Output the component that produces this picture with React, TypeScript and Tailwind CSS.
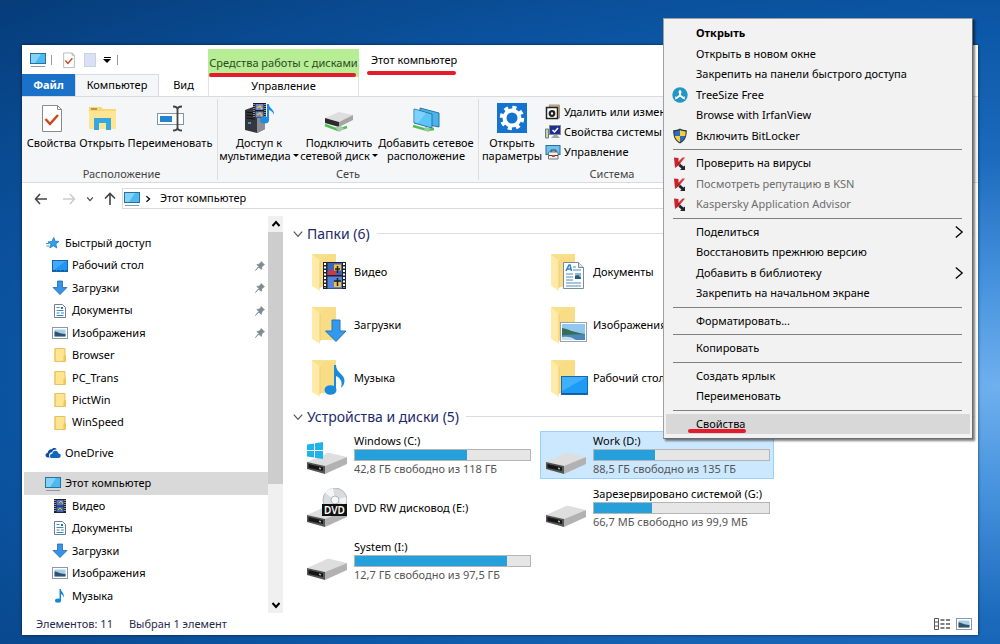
import type { ReactNode } from 'react';

type IconName =
  | 'monitor'
  | 'star'
  | 'desktop'
  | 'download'
  | 'document'
  | 'picture'
  | 'folder'
  | 'cloud'
  | 'film'
  | 'music';

interface NavItem {
  label: string;
  icon: IconName;
  level: 0 | 1;
  pinned?: boolean;
  selected?: boolean;
  gapBefore?: boolean;
}

interface Drive {
  name: string;
  free?: string;
  used?: number;
  kind: 'plain' | 'windows' | 'dvd';
  selected?: boolean;
}

interface MenuEntry {
  label: string;
  icon?: 'treesize' | 'shield' | 'kaspersky';
  bold?: boolean;
  disabled?: boolean;
  submenu?: boolean;
  active?: boolean;
}

const navItems: NavItem[] = [
  { label: 'Быстрый доступ', icon: 'star', level: 0 },
  { label: 'Рабочий стол', icon: 'desktop', level: 1, pinned: true },
  { label: 'Загрузки', icon: 'download', level: 1, pinned: true },
  { label: 'Документы', icon: 'document', level: 1, pinned: true },
  { label: 'Изображения', icon: 'picture', level: 1, pinned: true },
  { label: 'Browser', icon: 'folder', level: 1 },
  { label: 'PC_Trans', icon: 'folder', level: 1 },
  { label: 'PictWin', icon: 'folder', level: 1 },
  { label: 'WinSpeed', icon: 'folder', level: 1 },
  { label: 'OneDrive', icon: 'cloud', level: 0, gapBefore: true },
  { label: 'Этот компьютер', icon: 'monitor', level: 0, gapBefore: true, selected: true },
  { label: 'Видео', icon: 'film', level: 1 },
  { label: 'Документы', icon: 'document', level: 1 },
  { label: 'Загрузки', icon: 'download', level: 1 },
  { label: 'Изображения', icon: 'picture', level: 1 },
  { label: 'Музыка', icon: 'music', level: 1 },
];

const folders: { label: string; icon: IconName }[] = [
  { label: 'Видео', icon: 'film' },
  { label: 'Документы', icon: 'document' },
  { label: 'Загрузки', icon: 'download' },
  { label: 'Изображения', icon: 'picture' },
  { label: 'Музыка', icon: 'music' },
  { label: 'Рабочий стол', icon: 'desktop' },
];

const drives: Drive[] = [
  { name: 'Windows (C:)', free: '42,8 ГБ свободно из 118 ГБ', used: 64, kind: 'windows' },
  { name: 'Work (D:)', free: '88,5 ГБ свободно из 135 ГБ', used: 35, kind: 'plain', selected: true },
  { name: 'DVD RW дисковод (E:)', kind: 'dvd' },
  { name: 'Зарезервировано системой (G:)', free: '66,7 МБ свободно из 99,9 МБ', used: 33, kind: 'plain' },
  { name: 'System (I:)', free: '12,7 ГБ свободно из 97,5 ГБ', used: 87, kind: 'plain' },
];

const menuGroups: MenuEntry[][] = [
  [
    { label: 'Открыть', bold: true },
    { label: 'Открыть в новом окне' },
    { label: 'Закрепить на панели быстрого доступа' },
    { label: 'TreeSize Free', icon: 'treesize' },
    { label: 'Browse with IrfanView' },
    { label: 'Включить BitLocker', icon: 'shield' },
  ],
  [
    { label: 'Проверить на вирусы', icon: 'kaspersky' },
    { label: 'Посмотреть репутацию в KSN', icon: 'kaspersky', disabled: true },
    { label: 'Kaspersky Application Advisor', icon: 'kaspersky', disabled: true },
  ],
  [
    { label: 'Поделиться', submenu: true },
    { label: 'Восстановить прежнюю версию' },
    { label: 'Добавить в библиотеку', submenu: true },
    { label: 'Закрепить на начальном экране' },
  ],
  [{ label: 'Форматировать...' }],
  [{ label: 'Копировать' }],
  [{ label: 'Создать ярлык' }, { label: 'Переименовать' }],
  [{ label: 'Свойства', active: true }],
];

/* Small 16px icons */

function SmallIcon({ name }: { name: IconName }) {
  return (
    <svg aria-hidden="true" className="w-4 h-4 shrink-0" viewBox="0 0 16 16" fill="none">
      {name === 'monitor' && (
        <>
          <rect x="0.5" y="1.5" width="15" height="10" fill="#4cb9f0" stroke="#2a6f9e" />
          <path d="M1 2h10L5 11H1z" fill="#83d3f9" />
          <path d="M1 14.500h14" stroke="#7d9cb0" />
        </>
      )}
      {name === 'star' && (
        <path d="M8.800 2.500l1.200 3.700 4 .2-3.200 2.500 1 4.100-3.400-2.300L4.800 13l1.200-3.900L3 6.900l3.900-.4zM1 8.500h3M1.500 11h3" fill="#2ea3ea" stroke="#1b76bb" strokeWidth=".8" />
      )}
      {name === 'desktop' && (
        <>
          <rect x="0.5" y="2.500" width="15" height="11" fill="#2196f3" stroke="#1465ad" />
          <path d="M1 3h13L2 12H1z" fill="#43a9f8" />
          <path d="M1 12.500h14" stroke="#135893" strokeDasharray="3 1" />
        </>
      )}
      {name === 'download' && (
        <path d="M5.500 1h5v6.500H15L8 14.500 1 7.500h4.500z" fill="#3793e6" stroke="#2467ad" strokeWidth=".8" />
      )}
      {name === 'document' && (
        <>
          <path d="M2.500 1.500h8l3 3v10h-11z" fill="#fff" stroke="#6f7f8c" />
          <path d="M4.500 4.500h3M4.500 7.500h7M4.500 10h3M9 10h3M4.500 12.500h7" stroke="#3c8dbc" />
          <path d="M9 4h2v2H9z" fill="#3c6f92" />
        </>
      )}
      {name === 'picture' && (
        <>
          <rect x="0.5" y="2.500" width="15" height="11" fill="#fff" stroke="#8999a5" />
          <rect x="2.500" y="4.500" width="11" height="7" fill="#a7cfea" />
          <path d="M2.500 6.500c3 0 4 2 11 2.500v2.500h-11z" fill="#31536e" />
        </>
      )}
      {name === 'folder' && (
        <>
          <path d="M3 1.500h10v13H3z" fill="#ffe491" stroke="#dcb54c" strokeWidth=".8" />
          <path d="M11.500 9l2.500-1v6.500h-2.500z" fill="#eec84f" />
          <path d="M2.500 1.500h1V15h-1z" fill="#edc550" />
        </>
      )}
      {name === 'cloud' && (
        <>
          <path d="M3 12.500C1 12.500.3 11 .5 9.800.7 8.500 2 8 2.600 8c.2-2.400 2.200-4 4.300-3.700C8 2.700 10.500 2.500 11.800 4.500 9 4.200 7.300 5.500 7 7.200 5 7.300 4 8.800 4 10.300c0 1 .3 1.700.8 2.200z" fill="#0c4fa0" />
          <path d="M7 13c-1.500 0-2-1.200-2-2.100 0-1.300 1-2 2.200-2.100C7.600 6.600 9 5.700 10.500 5.800c1.500.1 2.700 1.200 3 2.600 1.500.1 2.300 1.200 2.200 2.400C15.600 12.200 14.700 13 13.500 13z" fill="#1266bb" />
        </>
      )}
      {name === 'film' && (
        <>
          <rect x="2" y="1" width="12" height="14" fill="#1d2236" />
          <path d="M3 2v12M13 2v12" stroke="#fff" strokeDasharray="1 1" />
          <rect x="4.500" y="2" width="7" height="5.500" fill="#5477c4" />
          <rect x="4.500" y="8.500" width="7" height="5.500" fill="#4467b4" />
          <path d="M7 5l2-2 2 3M6 12l2-2 2 2.500" stroke="#e5b944" />
        </>
      )}
      {name === 'music' && (
        <>
          <path d="M7.500 1h1.300c.2 3 4.200 4 2.700 9-.1-2.400-1.200-3.500-2.500-4v6.500H7.500z" fill="#1687d2" />
          <ellipse cx="6" cy="12.600" rx="3" ry="2.200" fill="#1687d2" />
        </>
      )}
    </svg>
  );
}

function Pin() {
  return (
    <svg aria-hidden="true" className="w-2.5 h-2.5" viewBox="0 0 10 10">
      <path d="M6.200.6l3.200 3.200-1 .5-1.700 1.700-.1 2.200L5 7.500 3.500 6 .5 9.500 4 5.500 1.800 3.400l2.200-.1L5.700 1.600z" fill="#7f8b93" stroke="#7f8b93" strokeWidth=".8" />
    </svg>
  );
}

function Chevron({ dir, className }: { dir: 'up' | 'down' | 'right'; className: string }) {
  const paths = { up: 'M1.500 7L5 3l3.500 4', down: 'M1.500 3L5 7l3.500-4', right: 'M3 1.500L7 5 3 8.500' };
  return (
    <svg aria-hidden="true" className={className} viewBox="0 0 10 10" fill="none" stroke="currentColor">
      <path d={paths[dir]} />
    </svg>
  );
}

/* Large tile icons */

function FolderIcon({ name }: { name: IconName }) {
  return (
    <svg aria-hidden="true" className="w-10 h-10 shrink-0 overflow-visible" viewBox="0 0 40 40" fill="none">
      <path d="M1 2h24v33H9z" fill="#f9e08c" />
      <path d="M9 9l3-5 13-1v32H9z" fill="#f8dc86" />
      <path d="M1 2l8 7v30l-3-2-5-3z" fill="#ffeaa8" />
      <path d="M9 9v27" stroke="#ecce74" />
      {name === 'film' && (
        <>
          <rect x="12" y="10" width="23" height="27" fill="#20222c" />
          <path d="M14 11v25M33 11v25" stroke="#fff" strokeWidth="2" strokeDasharray="2 1.500" />
          <rect x="16.500" y="11" width="14.500" height="12" fill="#3e63bd" />
          <rect x="16.500" y="24.500" width="14.500" height="12" fill="#5683da" />
          <path d="M16.500 20l5-3 4 3v3h-9z" fill="#c43b4b" />
          <path d="M23 12.500h7v6h-7zM23 30h7v5h-7z" fill="#f3c33b" />
          <path d="M26.500 14v7M24 17h5M26.500 26v8M23 29h7" stroke="#222" strokeWidth="1.500" />
        </>
      )}
      {name === 'document' && (
        <>
          <path d="M13.500 10.500h15l5 5v21h-20z" fill="#fff" stroke="#7b8b98" />
          <path d="M28.500 10.500v5h5" fill="#d7e3ec" stroke="#7b8b98" />
          <path d="M16 19l3-6h1l1.500 6M17 17h4" stroke="#2f83c6" strokeWidth="1.500" />
          <path d="M23 15h3M23 18h8M16 22h7M16 25h7M16 28h7M16 31h15M16 34h15" stroke="#4b8fbd" />
          <path d="M25 21h6v6h-6z" fill="#83b9dc" />
          <path d="M25 24l3-1 3 3v1h-6z" fill="#2b5978" />
        </>
      )}
      {name === 'download' && (
        <path d="M21 15h8v11h6L25 36.500 14.500 26H21z" fill="#3399ea" stroke="#2874b9" />
      )}
      {name === 'picture' && (
        <>
          <rect x="10.500" y="17.500" width="26" height="19" fill="#fff" stroke="#93a4b2" />
          <rect x="12" y="19" width="23" height="16" fill="#93c8ee" />
          <path d="M12 23c6 1 10 4 23 6v2H12z" fill="#356d55" />
          <path d="M12 30l23-1v6H12z" fill="#4c87b9" />
          <path d="M12 32c6-1 10 0 14 3H12z" fill="#c4dfee" />
        </>
      )}
      {name === 'music' && (
        <>
          <path d="M23 7h2c0 8 9 9 8.500 16-.1 3-1.500 5-3.500 7 2-7-1-10-5-12v13h-2z" fill="#1a8bdc" />
          <ellipse cx="19.500" cy="32" rx="6" ry="4.800" fill="#1a8bdc" />
        </>
      )}
      {name === 'desktop' && (
        <>
          <rect x="11.500" y="18.500" width="26" height="18" fill="#1e9bf6" stroke="#1668a8" />
          <path d="M12 19h25L12 33z" fill="#41b0fb" />
          <path d="M12 35.500h25" stroke="#0d5c9d" />
        </>
      )}
    </svg>
  );
}

function DriveIcon({ kind }: { kind: Drive['kind'] }) {
  return (
    <svg aria-hidden="true" className="w-10 h-10 shrink-0" viewBox="0 0 40 40" fill="none">
      <path d="M0 27l20-9c1-.5 2-.5 3 0L40 22 18 31z" fill="#dedede" />
      <path d="M18 31l22-9v7L18 39z" fill="#b2b2b2" />
      <path d="M0 27l18 4v8L0 34z" fill="#555" />
      <path d="M1.500 29l14.500 3.300v3.700L1.500 33z" fill="#161616" />
      <path d="M12 32.500l2 .5v1.500l-2-.5z" fill="#8fd18a" />
      {kind === 'windows' && (
        <path d="M0 9.500l7-1V15H0zM8 8.300l8-1.300v8H8zM0 16h7v6.500l-7-1zM8 16h8v8l-8-1.300z" fill="#1fb3ec" />
      )}
      {kind === 'dvd' && (
        <>
          <circle cx="28" cy="12" r="12" fill="#d9dcde" stroke="#b4b8bb" />
          <path d="M28 12L18 5a12 12 0 0 1 8-5z" fill="#f4f6f7" />
          <path d="M28 12l11-3a12 12 0 0 1-1 8z" fill="#f1f3f4" />
          <circle cx="28" cy="12" r="4" fill="#f7f7f7" stroke="#b4b8bb" />
          <rect x="15" y="16" width="25" height="12" fill="#111" />
          <text x="27.500" y="25.500" textAnchor="middle" fill="#fff" className="text-[10px] font-semibold">DVD</text>
        </>
      )}
    </svg>
  );
}

/* Ribbon */

function RibbonButton({ icon, lines, arrow, className }: { icon: ReactNode; lines: string[]; arrow?: boolean; className: string }) {
  return (
    <button type="button" className={`flex flex-col items-center shrink-0 whitespace-nowrap ${className}`}>
      {icon}
      {lines.map((line, i) => (
        <span key={line} className="flex items-center gap-0.5 leading-[13px] first-of-type:mt-0.5">
          {line}
          {arrow && i === lines.length - 1 && <span className="border-x-[3px] border-x-transparent border-t-[3px] border-t-black" />}
        </span>
      ))}
    </button>
  );
}

function RibbonGroup({ label, className, children }: { label: string; className: string; children: ReactNode }) {
  return (
    <section className={`flex flex-col shrink-0 pb-0.5 ${className}`}>
      <div className="flex items-start flex-1 pt-[5px]">{children}</div>
      <h2 className="text-center leading-3 text-[#444]">{label}</h2>
    </section>
  );
}

function PropertiesIcon({ className }: { className: string }) {
  return (
    <svg aria-hidden="true" className={className} viewBox="0 0 32 32" fill="none">
      <path d="M6.500 3.500h15l4 4v22h-19z" fill="#fff" stroke="#8a8a8a" />
      <path d="M21.500 3.500v4h4" stroke="#8a8a8a" />
      <path d="M9.500 17l4.500 5 8-9" stroke="#d0451b" strokeWidth="2.500" />
    </svg>
  );
}

function OpenIcon() {
  return (
    <svg aria-hidden="true" className="w-8 h-8" viewBox="0 0 32 32" fill="none">
      <path d="M3 5h12l2 2h13v20H3z" fill="#f8d775" />
      <path d="M3 9h27v18H3z" fill="#ffe493" />
      <path d="M5 7h6" stroke="#a98532" strokeWidth="1.500" />
      <path d="M8 16h17v12h-5v-7h-7v7H8z" fill="#35a8dd" />
    </svg>
  );
}

function RenameIcon() {
  return (
    <svg aria-hidden="true" className="w-8 h-8" viewBox="0 0 32 32" fill="none">
      <rect x="3.500" y="11.500" width="26" height="11" fill="#fff" stroke="#8295a5" />
      <rect x="6" y="14" width="12" height="6" fill="#2383cf" />
      <path d="M19 4.500c3 0 4.500 1 4.500 3v18c0 2-1.500 3-4.500 3M28 4.500c-3 0-4.500 1-4.500 3M28 28.500c-3 0-4.500-1-4.500-3" stroke="#444" strokeWidth="1.800" />
    </svg>
  );
}

function MediaIcon() {
  return (
    <svg aria-hidden="true" className="w-8 h-8" viewBox="0 0 32 32" fill="none">
      <path d="M2 8l8-3 12 1v21l-8 4-12-3z" fill="#34373d" />
      <path d="M14 10l8-3v20l-8 4z" fill="#8b8f95" />
      <path d="M3.500 10l8 1.200M3.500 13l8 1.200M3.500 16l8 1.200" stroke="#0d0e10" />
      <path d="M5 21h3" stroke="#4fb6ef" strokeWidth="1.500" />
      <path d="M10 1h13v15H10z" fill="#191b25" />
      <path d="M11 2v13M22 2v13" stroke="#fff" strokeDasharray="1 1" />
      <path d="M12.500 2h8v6h-8zM12.500 9.500h8v6h-8z" fill="#6b87cf" />
      <path d="M14 6l3-2 2 3M14 13l3-2 2 3" stroke="#ecc04a" strokeWidth="1.500" />
      <path d="M24 2h1.800c.5 5 6 5 5.200 11-1-3-2.500-4-5-5v10h-2z" fill="#1f8ce0" />
      <ellipse cx="21.500" cy="18" rx="4.500" ry="3.500" fill="#1f8ce0" />
    </svg>
  );
}

function NetDriveIcon() {
  return (
    <svg aria-hidden="true" className="w-8 h-8" viewBox="0 0 32 32" fill="none">
      <path d="M2 16l14-6 14 3-14 7z" fill="#dedede" />
      <path d="M16 20l14-7v5l-14 7z" fill="#a5a5a5" />
      <path d="M2 16l14 4v5L2 21z" fill="#2b2b2b" />
      <path d="M2 23l13 5 9-3" stroke="#4fbf55" strokeWidth="2.500" />
      <path d="M12 25l6-1 3 3-5 3z" fill="#a9c9b0" />
    </svg>
  );
}

function NetPlaceIcon() {
  return (
    <svg aria-hidden="true" className="w-8 h-8" viewBox="0 0 32 32" fill="none">
      <path d="M10 6l19 5v14l-19-4z" fill="#4bb2ea" stroke="#2776a5" />
      <path d="M4 7l18 5v14L4 21z" fill="#5cc4f6" stroke="#2776a5" />
      <path d="M4.500 7.500L16 11 8 21l-3.500-.8z" fill="#7dd3fb" />
      <path d="M3 24l14 4 7-1" stroke="#4fbf55" strokeWidth="2.500" />
      <path d="M15 25l5 1-1 4-5-2z" fill="#9bc7a4" />
    </svg>
  );
}

function SettingsIcon() {
  return (
    <svg aria-hidden="true" className="w-8 h-8" viewBox="0 0 32 32" fill="none">
      <rect x="1" y="1" width="30" height="30" fill="#1472d0" />
      <circle cx="16" cy="16" r="7.500" stroke="#fff" strokeWidth="4" />
      <circle cx="16" cy="16" r="10.500" stroke="#fff" strokeWidth="3.500" strokeDasharray="4.100 4.147" />
    </svg>
  );
}

function UninstallIcon() {
  return (
    <svg aria-hidden="true" className="w-4 h-4 shrink-0" viewBox="0 0 16 16" fill="none">
      <path d="M4 1h10.500v13H10z" fill="#d5b46b" stroke="#999" />
      <rect x="1.500" y="3.500" width="11" height="11" fill="#fff" stroke="#222" strokeWidth="1.500" />
      <circle cx="7" cy="9.500" r="2.300" stroke="#222" strokeWidth="2.200" />
    </svg>
  );
}

function SystemPropsIcon() {
  return (
    <svg aria-hidden="true" className="w-4 h-4 shrink-0" viewBox="0 0 16 16" fill="none">
      <rect x="4.500" y="1.500" width="11" height="9" fill="#1c2f94" stroke="#888" />
      <path d="M7.500 6l2 2L13 4" stroke="#fff" strokeWidth="1.500" />
      <path d="M.500 5h3v9h-3z" fill="#bcd3bf" stroke="#707d72" />
      <path d="M6 14l3-3h3l3 3z" fill="#9ba5ac" />
    </svg>
  );
}

function ManageIcon() {
  return (
    <svg aria-hidden="true" className="w-4 h-4 shrink-0" viewBox="0 0 16 16" fill="none">
      <rect x="1" y="1.500" width="14" height="9" fill="#6cc3f1" stroke="#2c6f9c" />
      <path d="M3.500 8h9.500v7H3.500z" fill="#f2f2f2" stroke="#777" />
      <path d="M6 8V6h5v2M4 11.500h9" stroke="#444" />
      <path d="M7 11h3v2H7z" fill="#c34a39" />
    </svg>
  );
}

/* Context menu icons */

function MenuIcon({ name }: { name: NonNullable<MenuEntry['icon']> }) {
  return (
    <svg aria-hidden="true" className="w-4 h-4" viewBox="0 0 16 16" fill="none">
      {name === 'treesize' && (
        <>
          <circle cx="8" cy="8" r="7.700" fill="#2396c3" />
          <path d="M8 4v4.500L4.500 11M8 8.500l3.500 2.500" stroke="#fff" strokeWidth="2" />
          <path d="M6 5.500L8 2.500l2 3zM3 12.500l.5-3.600 2.200 2.900zM13 12.500l-.5-3.600-2.200 2.900z" fill="#fff" />
        </>
      )}
      {name === 'shield' && (
        <>
          <path d="M8 .5c2 1.200 4 1.700 6.800 1.700C14.800 9 13 12.800 8 15.500 3 12.800 1.200 9 1.200 2.200 4 2.200 6 1.700 8 .5z" fill="#27384b" />
          <path d="M8 2v6H2.800c-.3-1.300-.4-2.700-.4-4.500C4.500 3.400 6.300 3 8 2z" fill="#2c6cba" />
          <path d="M8 2v6h5.200c.3-1.300.4-2.700.4-4.500C11.500 3.400 9.700 3 8 2z" fill="#f6cf3f" />
          <path d="M8 8v6.200C5 12.500 3.500 10.700 2.800 8z" fill="#f6cf3f" />
          <path d="M8 8v6.200c3-1.700 4.500-3.500 5.200-6.200z" fill="#2c6cba" />
        </>
      )}
      {name === 'kaspersky' && (
        <>
          <path d="M2 2.500l4.500.5v4L3 13z" fill="#c9232a" />
          <path d="M6.500 6.500L10.500 2.500H13L7 10l-4 3z" fill="#d8383d" />
          <path d="M3 13l3.500-6L8 8z" fill="#9c1218" />
          <path d="M8 8.500l3.500 3 1.500-1V15H8l1.500-1.500L6.500 11z" fill="#23262b" />
        </>
      )}
    </svg>
  );
}

function ContextMenu() {
  return (
    <div
      role="menu"
      aria-label="Work (D:)"
      className="absolute top-[18px] left-[663px] w-[310px] h-[421px] flex flex-col py-1 px-0.5 bg-[#f2f2f2] border border-[#a0a0a0] border-r-[#6d6d6d] border-b-[#6d6d6d] shadow-[2px_2px_2px_rgba(0,0,0,0.5)]"
    >
      {menuGroups.map((group, i) => (
        <div key={group[0].label} className="contents">
          {i > 0 && (
            <div role="separator" className="h-[7px] shrink-0 flex items-center pl-[7px] pr-2">
              <span className="h-px w-full bg-[#808080]" />
            </div>
          )}
          {group.map((entry) => (
            <button
              key={entry.label}
              type="button"
              role="menuitem"
              disabled={entry.disabled}
              className={`flex-1 min-h-0 flex items-center text-left pl-1.5 pr-[3px] ${entry.active ? 'bg-[#d8d8d8]' : ''} ${entry.disabled ? 'text-[#6d6d6d]' : ''} ${entry.bold ? 'font-bold' : ''}`}
            >
              <span className="w-6 shrink-0">{entry.icon && <MenuIcon name={entry.icon} />}</span>
              <span className="relative flex-1">
                {entry.label}
                {entry.active && <span className="absolute -left-2 -bottom-px w-[58px] h-1 rounded-full bg-[#e31b2c]" />}
              </span>
              {entry.submenu && <Chevron dir="right" className="w-4 h-4 [stroke-width:.8]" />}
            </button>
          ))}
        </div>
      ))}
    </div>
  );
}

function SectionTitle({ children }: { children: ReactNode }) {
  return (
    <h2 className="flex items-center gap-[3px] h-[29px] pr-1 text-[14px] text-[#1c2a6b]">
      <Chevron dir="down" className="w-3 h-3 text-[#555]" />
      {children}
      <span className="ml-1 h-px flex-1 bg-[#dcdcdc]" />
    </h2>
  );
}

function DriveTile({ drive }: { drive: Drive }) {
  return (
    <button
      type="button"
      className={`h-12 flex items-center gap-[7px] pl-[5px] border text-left ${drive.selected ? 'bg-[#cce8ff] border-[#99d1ff]' : 'border-transparent'}`}
    >
      <DriveIcon kind={drive.kind} />
      <span className="flex flex-col leading-4">
        {drive.name}
        {drive.free && (
          <>
            <span className="block w-[177px] h-3 border border-[#b5b5b5] bg-[#e6e6e6]">
              <span className="block h-full bg-[#26a0da]" style={{ width: `${drive.used}%` }} />
            </span>
            <span className="text-[#555]">{drive.free}</span>
          </>
        )}
      </span>
    </button>
  );
}

export default function App() {
  return (
    <div className="relative min-h-screen flex flex-col pt-[45px] pb-[9px] px-[22px] overflow-hidden bg-[radial-gradient(ellipse_at_100%_60%,#6fb0ee_0%,#4491dc_20%,#1c6abc_42%,#0c58a8_65%,#063c79_100%)] font-['Noto_Sans',sans-serif] text-[11px] text-black">
      <div className="flex-1 flex flex-col bg-white shadow-[0_0_3px_rgba(0,0,0,0.6)]">
        {/* Title bar and ribbon tabs */}
        <header className="flex h-[51px]">
          <div className="w-[186px] shrink-0 flex flex-col">
            <div className="h-[29px] flex items-center pl-2">
              <SmallIcon name="monitor" />
              <span className="ml-[5px] w-px h-2.5 bg-[#999]" />
              <button type="button" aria-label="Свойства" className="ml-2">
                <PropertiesIcon className="w-[18px] h-[18px]" />
              </button>
              <button type="button" aria-label="Новая папка" className="ml-1.5 w-3 h-3.5 bg-[#dbe1f4] border border-[#cbd2e6]" />
              <button type="button" aria-label="Настройка панели" className="ml-[7px] flex flex-col items-center gap-px">
                <span className="w-[7px] h-px bg-black" />
                <span className="border-x-4 border-x-transparent border-t-4 border-t-black" />
              </button>
              <span className="ml-1.5 w-px h-2.5 bg-[#999]" />
            </div>
            <div role="tablist" className="flex h-[22px]">
              <button type="button" role="tab" className="w-[53px] bg-[#1972c8] font-bold text-white">Файл</button>
              <button type="button" role="tab" aria-selected="true" className="w-[84px] bg-[#f5f6f7] border border-b-0 border-[#dadbdc]">Компьютер</button>
              <button type="button" role="tab" className="w-[49px]">Вид</button>
            </div>
          </div>
          <div className="w-[151px] shrink-0 pt-1 flex flex-col">
            <div className="relative h-7 flex items-center justify-center whitespace-nowrap bg-[#b6ed95] text-[#2d4a23]">
              Средства работы с дисками
              <span className="absolute left-px bottom-0 w-[147px] h-1 rounded-full bg-[#e31b2c]" />
            </div>
            <button type="button" role="tab" className="flex-1 border-x border-[#dfe6db]">Управление</button>
          </div>
          <h1 className="relative self-start ml-3 h-[30px] leading-[30px]">
            Этот компьютер
            <span className="absolute -left-1 bottom-0 w-[89px] h-1 rounded-full bg-[#e31b2c]" />
          </h1>
        </header>

        {/* Ribbon */}
        <div className="flex h-[87px] overflow-hidden bg-[#f5f6f7] border-y border-[#dadbdc]">
          <RibbonGroup label="Расположение" className="w-[195px] pl-1">
            <RibbonButton className="w-[51px]" icon={<PropertiesIcon className="w-8 h-8" />} lines={['Свойства']} />
            <RibbonButton className="w-[50px]" icon={<OpenIcon />} lines={['Открыть']} />
            <RibbonButton className="w-[86px]" icon={<RenameIcon />} lines={['Переименовать']} />
          </RibbonGroup>
          <span className="my-0.5 w-px bg-[#dcdddf]" />
          <RibbonGroup label="Сеть" className="w-[260px]">
            <RibbonButton className="w-[82px]" icon={<MediaIcon />} lines={['Доступ к', 'мультимедиа']} arrow />
            <RibbonButton className="w-[78px]" icon={<NetDriveIcon />} lines={['Подключить', 'сетевой диск']} arrow />
            <RibbonButton className="w-24" icon={<NetPlaceIcon />} lines={['Добавить сетевое', 'расположение']} />
          </RibbonGroup>
          <span className="my-0.5 w-px bg-[#dcdddf]" />
          <RibbonGroup label="Система" className="w-[262px] pl-1">
            <RibbonButton className="w-[58px]" icon={<SettingsIcon />} lines={['Открыть', 'параметры']} />
            <div className="flex flex-col pl-1">
              <button type="button" className="h-5 flex items-center gap-[3px] whitespace-nowrap"><UninstallIcon />Удалить или изменить программу</button>
              <button type="button" className="h-5 flex items-center gap-[3px] whitespace-nowrap"><SystemPropsIcon />Свойства системы</button>
              <button type="button" className="h-5 flex items-center gap-[3px] whitespace-nowrap"><ManageIcon />Управление</button>
            </div>
          </RibbonGroup>
        </div>

        {/* Address bar */}
        <div className="flex items-center mt-[5px] pr-2 text-[#444]">
          <button type="button" aria-label="Назад" className="ml-3 w-3.5">
            <svg viewBox="0 0 14 12" fill="none" stroke="currentColor" strokeWidth="1.500"><path d="M13 6H1.500M6 1L1.500 6 6 11" /></svg>
          </button>
          <button type="button" aria-label="Вперёд" className="ml-3.5 w-3.5 text-[#ccc]">
            <svg viewBox="0 0 14 12" fill="none" stroke="currentColor" strokeWidth="1.500"><path d="M1 6h11.500M8 1l4.500 5L8 11" /></svg>
          </button>
          <button type="button" aria-label="Последние расположения" className="ml-2.5 w-2">
            <Chevron dir="down" className="w-2 h-2 [stroke-width:1.5]" />
          </button>
          <button type="button" aria-label="Вверх" className="ml-2.5 w-3">
            <svg viewBox="0 0 12 14" fill="none" stroke="currentColor" strokeWidth="1.600"><path d="M6 13V1.500M1 6.500l5-5 5 5" /></svg>
          </button>
          <nav aria-label="Адрес" className="ml-1.5 flex-1 h-[21px] flex items-center pl-px border border-[#d9d9d9] text-black">
            <SmallIcon name="monitor" />
            <Chevron dir="right" className="ml-1 w-2 h-2 [stroke-width:1.5]" />
            <a href="#computer" className="ml-2">Этот компьютер</a>
          </nav>
        </div>

        <div className="flex-1 flex mt-[7px]">
          {/* Navigation pane */}
          <nav aria-label="Область переходов" className="w-[246px] shrink-0 flex flex-col pt-4 pb-1.5 pl-0.5">
            {navItems.map((item, i) => (
              <a
                key={i}
                href="#"
                className={`flex-1 flex items-center gap-1 pr-[3px] ${item.level === 0 ? 'pl-[21px]' : 'pl-7'} ${item.gapBefore ? 'mt-2' : ''} ${item.selected ? 'bg-[#d9d9d9]' : ''}`}
              >
                <SmallIcon name={item.icon} />
                <span className="flex-1">{item.label}</span>
                {item.pinned && <Pin />}
              </a>
            ))}
          </nav>
          <div aria-hidden="true" className="w-[15px] shrink-0 flex flex-col items-center bg-[#f0f0f0]">
            <Chevron dir="up" className="w-2.5 h-4 stroke-2" />
            <span className="h-[252px] w-full bg-[#cdcdcd]" />
            <Chevron dir="down" className="w-2.5 h-4 mt-auto stroke-2" />
          </div>

          {/* Files */}
          <main className="flex-1 min-w-0 pl-[9px] pt-[3px]">
            <SectionTitle>Папки (6)</SectionTitle>
            <div className="grid grid-cols-[repeat(auto-fill,234px)] gap-[5px] pl-[9px]">
              {folders.map((folder) => (
                <button key={folder.label} type="button" className="h-12 flex items-center gap-[3px] pl-2.5 text-left">
                  <FolderIcon name={folder.icon} />
                  {folder.label}
                </button>
              ))}
            </div>
            <SectionTitle>Устройства и диски (5)</SectionTitle>
            <div className="grid grid-cols-[repeat(auto-fill,234px)] gap-[5px] pl-[9px]">
              {drives.map((drive) => (
                <DriveTile key={drive.name} drive={drive} />
              ))}
            </div>
          </main>
        </div>

        {/* Status bar */}
        <footer className="h-[22px] flex items-center gap-4 pl-3.5 pr-1.5 text-[#1e2b4d]">
          <span>Элементов: 11</span>
          <span>Выбран 1 элемент</span>
          <div className="ml-auto flex gap-1.5">
            <button type="button" aria-label="Таблица">
              <svg className="w-4 h-4" viewBox="0 0 16 16" fill="none" stroke="#555">
                <path d="M.500 2.500h4v11h-4zM.500 6h4M.500 10h4" />
                <path d="M6.500 4h4M12 4h4M6.500 8h4M12 8h4M6.500 12h4M12 12h4" strokeWidth="1.300" />
              </svg>
            </button>
            <button type="button" aria-label="Крупные значки">
              <SmallIcon name="picture" />
            </button>
          </div>
        </footer>
      </div>

      <ContextMenu />
    </div>
  );
}
